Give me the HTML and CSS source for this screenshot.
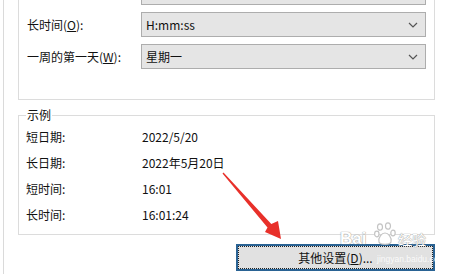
FILE: index.html
```html
<!DOCTYPE html>
<html lang="zh-CN">
<head>
  <meta charset="UTF-8" />
  <title>区域格式</title>
  <link rel="stylesheet" href="styles.css">
</head>
<body>

  <div class="page">
    <div class="group formats">
      <div class="row">
        <label></label>
        <div class="select"></div>
      </div>
      <div class="row">
        <label>长时间(<u>O</u>):</label>
        <div class="select">H:mm:ss<svg class="chev" width="10" height="6" viewBox="0 0 10 6"><path d="M1 1 L5 5 L9 1" fill="none" stroke="#555" stroke-width="1.2"/></svg></div>
      </div>
      <div class="row">
        <label>一周的第一天(<u>W</u>):</label>
        <div class="select">星期一<svg class="chev" width="10" height="6" viewBox="0 0 10 6"><path d="M1 1 L5 5 L9 1" fill="none" stroke="#555" stroke-width="1.2"/></svg></div>
      </div>
    </div>

    <fieldset class="group example">
      <legend>示例</legend>
      <div class="sample"><span class="name">短日期:</span><span>2022/5/20</span></div>
      <div class="sample"><span class="name">长日期:</span><span>2022年5月20日</span></div>
      <div class="sample"><span class="name">短时间:</span><span>16:01</span></div>
      <div class="sample"><span class="name">长时间:</span><span>16:01:24</span></div>
    </fieldset>

    <div class="actions">
      <button class="button">其他设置(<u>D</u>)...</button>
    </div>

    <!-- watermark -->
    <div class="watermark">
      <span class="wm-bai">Bai</span>
      <svg class="wm-paw" width="22" height="24" viewBox="0 0 22 24">
        <g fill="#fff" stroke="#c4c4c4" stroke-width="1.2">
          <ellipse cx="6" cy="5" rx="2.5" ry="3.2"/>
          <ellipse cx="14" cy="4" rx="2.5" ry="3.2"/>
          <ellipse cx="2.8" cy="12" rx="2.2" ry="2.8"/>
          <ellipse cx="19" cy="11" rx="2.2" ry="2.8"/>
          <path d="M5 20 C4 15 8 11 11 11 C14 11 18 15 17 20 C16 23 6 23 5 20 Z"/>
        </g>
      </svg>
      <span class="wm-jy">经验</span>
      <span class="wm-url">jingyan.baidu.com</span>
    </div>

    <!-- red arrow -->
    <svg class="arrow" width="455" height="274" viewBox="0 0 455 274">
      <polygon fill="#e8302a" points="222.5,173.5 223.5,172.5 271.3,224.1 278,221 281,239 265,232 267.5,227.5"/>
    </svg>
  </div>

</body>
</html>
```

FILE: styles.css
```css
* { box-sizing: border-box; }
body {
  margin: 0;
  background-color: #fff;
  color: #111;
  font-family: "Noto Sans CJK SC", "Noto Sans", sans-serif;
  font-size: 12px;
  overflow: hidden;
}
.page {
  position: relative;
  margin: -30px 0 0 3px;
  border-left: 1px solid #dadada;
  padding-bottom: 4px;
}
.group {
  width: 417px;
  margin: 0 0 0 14px;
  border: 1px solid #dcdcdc;
}
.formats {
  padding: 9px 8px 30px 8px;
  display: flex;
  flex-direction: column;
  gap: 7px;
}
.row {
  display: flex;
  align-items: center;
}
.row label {
  width: 114px;
  flex-shrink: 0;
}
.select {
  flex: 1;
  height: 25px;
  display: flex;
  align-items: center;
  justify-content: space-between;
  padding: 0 4px 0 4px;
  background-color: #e5e5e5;
  border: 1px solid #adadad;
}
.chev {
  margin-right: 3px;
}
.example {
  margin-top: 7px;
  padding: 0 7px 7px 7px;
  min-width: 0;
}
.example legend {
  padding: 0 1px;
  line-height: 16px;
}
.sample {
  display: flex;
  height: 26px;
  align-items: center;
}
.sample .name {
  width: 116px;
  flex-shrink: 0;
}
.actions {
  width: 417px;
  margin: 9px 0 0 14px;
  display: flex;
  justify-content: flex-end;
}
.button {
  width: 199px;
  height: 27px;
  padding: 0;
  font-family: "Noto Sans CJK SC", "Noto Sans", sans-serif;
  font-size: 12px;
  color: #111;
  background-color: #e1e1e1;
  border: 2px solid #2a6394;
  outline: 1px dotted #222;
  outline-offset: -3px;
}
.watermark {
  position: absolute;
  left: 336px;
  top: 255px;
  width: 100px;
  height: 46px;
  color: #fff;
  pointer-events: none;
}
.wm-bai {
  position: absolute;
  left: 0;
  top: 4px;
  line-height: 20px;
  font-family: "Liberation Sans", sans-serif;
  font-weight: bold;
  font-size: 17px;
  text-shadow: 0 0 1px #999, 0 0 1px #999;
}
.wm-paw {
  position: absolute;
  left: 34px;
  top: -3px;
}
.wm-jy {
  position: absolute;
  left: 58px;
  top: 4px;
  line-height: 20px;
  font-size: 14px;
  text-shadow: 0 0 1px #999, 0 0 1px #999;
}
.wm-url {
  position: absolute;
  left: 37px;
  top: 28px;
  line-height: 12px;
  font-family: "Liberation Sans", sans-serif;
  font-size: 8.5px;
  color: rgba(255,255,255,0.85);
}
.arrow {
  position: absolute;
  left: -4px;
  top: 30px;
  pointer-events: none;
}
```
